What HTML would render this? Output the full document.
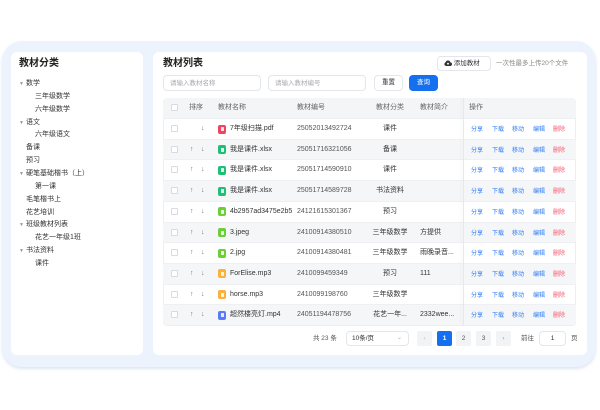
<!DOCTYPE html>
<html><head><meta charset="utf-8">
<style>
*{margin:0;padding:0;box-sizing:border-box}
body{width:600px;height:410px;background:#fff;font-family:"Liberation Sans","Noto Sans CJK SC",sans-serif;color:#333;position:relative;overflow:hidden}
.abs{position:absolute}
.outer{left:2px;top:41px;width:594px;height:326px;background:#edf3fd;border-radius:20px;box-shadow:0 2px 3px #dfe6f2}
.card{background:#fff;border-radius:6px}
.t{position:absolute;font-size:7px;color:#333;white-space:nowrap;line-height:10px}
.tri{position:absolute;font-size:5px;color:#999}
.h{font-weight:bold;font-size:10px;color:#222}
.inp{position:absolute;height:16px;border:1px solid #e3e6ea;border-radius:4px;font-size:6.5px;color:#aaa;padding:3px 6px;line-height:9px}
.row{position:absolute;left:163px;width:413px;height:20.7px;border-top:1px solid #eef0f3}
.row.o{background:#f5f6f8}
.cb{position:absolute;left:8px;top:6px;width:7px;height:7px;border:1px solid #d8dce2;border-radius:1px;background:#fff}
.ic{position:absolute;left:55px;top:5.5px;width:8px;height:9px;border-radius:2px}
.ic::after{content:"";position:absolute;left:2.5px;top:2.5px;width:3px;height:4px;background:rgba(255,255,255,.85);border-radius:.5px}
.op{position:absolute;top:7px;font-size:6px;color:#2f7cf6;line-height:8px}
.del{color:#f5566c}
.up{left:27px;top:5px;color:#777}.dn{left:38px;top:5px;color:#777}
.nm{left:67px;top:5px;width:62px;overflow:hidden}
.no{left:134px;top:5px;color:#555}
.ca{left:227px;top:5px;transform:translateX(-50%)}
.in{left:257px;top:5px}
.o1{left:308px}.o2{left:329px}.o3{left:349px}.o4{left:370px}.o5{left:390px}
.pg{position:absolute;top:331px;height:15px;width:15px;background:#f2f3f5;border-radius:2px;font-size:6.5px;color:#555;text-align:center;line-height:15px}
</style></head><body>
<div class="abs outer"></div>
<div class="abs card" style="left:11px;top:52px;width:132px;height:303px"></div>
<div class="abs card" style="left:153px;top:52px;width:434px;height:303px"></div>

<div class="t h" style="left:19px;top:59px">教材分类</div>
<div class="tri" style="left:19px;top:81px">▼</div><div class="t" style="left:26px;top:79px">数学</div>
<div class="t" style="left:35px;top:92px">三年级数学</div>
<div class="t" style="left:35px;top:105px">六年级数学</div>
<div class="tri" style="left:19px;top:120px">▼</div><div class="t" style="left:26px;top:118px">语文</div>
<div class="t" style="left:35px;top:130px">六年级语文</div>
<div class="t" style="left:26px;top:143px">备课</div>
<div class="t" style="left:26px;top:156px">预习</div>
<div class="tri" style="left:19px;top:171px">▼</div><div class="t" style="left:26px;top:169px">硬笔基础楷书（上）</div>
<div class="t" style="left:35px;top:182px">第一课</div>
<div class="t" style="left:26px;top:195px">毛笔楷书上</div>
<div class="t" style="left:26px;top:208px">花艺培训</div>
<div class="tri" style="left:19px;top:222px">▼</div><div class="t" style="left:26px;top:220px">班级教材列表</div>
<div class="t" style="left:35px;top:233px">花艺一年级1班</div>
<div class="tri" style="left:19px;top:248px">▼</div><div class="t" style="left:26px;top:246px">书法资料</div>
<div class="t" style="left:35px;top:259px">课件</div>

<div class="t h" style="left:163px;top:59px">教材列表</div>
<div class="abs" style="left:437px;top:56px;width:54px;height:15px;border:1px solid #e3e6ea;border-radius:4px;font-size:6.5px;line-height:13px;padding-left:6px">
<svg width="8" height="6" viewBox="0 0 8 6" style="vertical-align:-0.5px"><path d="M2 6 A2 2 0 0 1 1.6 2.2 A2.5 2.5 0 0 1 6.4 2.4 A1.8 1.8 0 0 1 6 6Z" fill="#333"/><path d="M4 5V3M3 4l1-1 1 1" stroke="#fff" stroke-width=".7" fill="none"/></svg> 添加教材</div>
<div class="t" style="left:496px;top:59px;font-size:6.5px;color:#888">一次性最多上传20个文件</div>

<div class="inp" style="left:163px;top:75px;width:98px">请输入教材名称</div>
<div class="inp" style="left:268px;top:75px;width:98px">请输入教材编号</div>
<div class="abs" style="left:374px;top:75px;width:29px;height:16px;border:1px solid #e3e6ea;border-radius:4px;font-size:6.5px;text-align:center;line-height:14px">重置</div>
<div class="abs" style="left:409px;top:75px;width:29px;height:16px;background:#1570ef;border-radius:4px;font-size:6.5px;text-align:center;line-height:16px;color:#fff">查询</div>

<div class="abs" style="left:163px;top:98px;width:413px;height:228px;border:1px solid #eceef2;border-radius:4px;background:#fff"></div>
<div class="row" style="top:98px;height:20px;background:#f4f5f7;border-radius:4px 4px 0 0;border-top:none">
<div class="cb"></div>
<div class="t" style="left:26px;top:5px;color:#666">排序</div>
<div class="t" style="left:55px;top:5px;color:#666">教材名称</div>
<div class="t" style="left:134px;top:5px;color:#666">教材编号</div>
<div class="t" style="left:213px;top:5px;color:#666">教材分类</div>
<div class="t" style="left:257px;top:5px;color:#666">教材简介</div>
<div class="t" style="left:306px;top:5px;color:#666">操作</div>
</div>

<div class="row" style="top:118px"><div class="cb"></div><div class="t dn">↓</div><div class="ic" style="background:#f0435c"></div><div class="t nm">7年级扫描.pdf</div><div class="t no">25052013492724</div><div class="t ca">课件</div><div class="t in"></div><div class="op o1">分享</div><div class="op o2">下载</div><div class="op o3">移动</div><div class="op o4">编辑</div><div class="op o5 del">删除</div></div>
<div class="row o" style="top:138.7px"><div class="cb"></div><div class="t up">↑</div><div class="t dn">↓</div><div class="ic" style="background:#1fbf76"></div><div class="t nm">我是课件.xlsx</div><div class="t no">25051716321056</div><div class="t ca">备课</div><div class="op o1">分享</div><div class="op o2">下载</div><div class="op o3">移动</div><div class="op o4">编辑</div><div class="op o5 del">删除</div></div>
<div class="row" style="top:159.4px"><div class="cb"></div><div class="t up">↑</div><div class="t dn">↓</div><div class="ic" style="background:#1fbf76"></div><div class="t nm">我是课件.xlsx</div><div class="t no">25051714590910</div><div class="t ca">课件</div><div class="op o1">分享</div><div class="op o2">下载</div><div class="op o3">移动</div><div class="op o4">编辑</div><div class="op o5 del">删除</div></div>
<div class="row o" style="top:180.1px"><div class="cb"></div><div class="t up">↑</div><div class="t dn">↓</div><div class="ic" style="background:#1fbf76"></div><div class="t nm">我是课件.xlsx</div><div class="t no">25051714589728</div><div class="t ca">书法资料</div><div class="op o1">分享</div><div class="op o2">下载</div><div class="op o3">移动</div><div class="op o4">编辑</div><div class="op o5 del">删除</div></div>
<div class="row" style="top:200.8px"><div class="cb"></div><div class="t up">↑</div><div class="t dn">↓</div><div class="ic" style="background:#6ccf3a"></div><div class="t nm">4b2957ad3475e2b5</div><div class="t no">24121615301367</div><div class="t ca">预习</div><div class="op o1">分享</div><div class="op o2">下载</div><div class="op o3">移动</div><div class="op o4">编辑</div><div class="op o5 del">删除</div></div>
<div class="row o" style="top:221.5px"><div class="cb"></div><div class="t up">↑</div><div class="t dn">↓</div><div class="ic" style="background:#6ccf3a"></div><div class="t nm">3.jpeg</div><div class="t no">24100914380510</div><div class="t ca">三年级数学</div><div class="t in">方提供</div><div class="op o1">分享</div><div class="op o2">下载</div><div class="op o3">移动</div><div class="op o4">编辑</div><div class="op o5 del">删除</div></div>
<div class="row" style="top:242.2px"><div class="cb"></div><div class="t up">↑</div><div class="t dn">↓</div><div class="ic" style="background:#6ccf3a"></div><div class="t nm">2.jpg</div><div class="t no">24100914380481</div><div class="t ca">三年级数学</div><div class="t in">雨晚录音...</div><div class="op o1">分享</div><div class="op o2">下载</div><div class="op o3">移动</div><div class="op o4">编辑</div><div class="op o5 del">删除</div></div>
<div class="row o" style="top:262.9px"><div class="cb"></div><div class="t up">↑</div><div class="t dn">↓</div><div class="ic" style="background:#fbb13c"></div><div class="t nm">ForElise.mp3</div><div class="t no">2410099459349</div><div class="t ca">预习</div><div class="t in">111</div><div class="op o1">分享</div><div class="op o2">下载</div><div class="op o3">移动</div><div class="op o4">编辑</div><div class="op o5 del">删除</div></div>
<div class="row" style="top:283.6px"><div class="cb"></div><div class="t up">↑</div><div class="t dn">↓</div><div class="ic" style="background:#fbb13c"></div><div class="t nm">horse.mp3</div><div class="t no">2410099198760</div><div class="t ca">三年级数学</div><div class="op o1">分享</div><div class="op o2">下载</div><div class="op o3">移动</div><div class="op o4">编辑</div><div class="op o5 del">删除</div></div>
<div class="row o" style="top:304.3px"><div class="cb"></div><div class="t up">↑</div><div class="t dn">↓</div><div class="ic" style="background:#5b7cf7"></div><div class="t nm">超然楼亮灯.mp4</div><div class="t no">24051194478756</div><div class="t ca">花艺一年...</div><div class="t in">2332wee...</div><div class="op o1">分享</div><div class="op o2">下载</div><div class="op o3">移动</div><div class="op o4">编辑</div><div class="op o5 del">删除</div></div>

<div class="abs" style="left:463px;top:98px;width:1px;height:227px;background:#e6e8ec;box-shadow:-2px 0 3px rgba(0,0,0,.06)"></div>

<div class="t" style="left:313px;top:334px;font-size:6.5px;color:#555">共 23 条</div>
<div class="abs" style="left:346px;top:331px;width:63px;height:15px;border:1px solid #e3e6ea;border-radius:4px;font-size:6.5px;line-height:13px;padding-left:5px">10条/页<span style="position:absolute;right:6px;color:#aaa;font-size:6px">⌄</span></div>
<div class="pg" style="left:417px;color:#bbb">‹</div>
<div class="pg" style="left:437px;background:#1570ef;color:#fff;font-weight:bold">1</div>
<div class="pg" style="left:456px">2</div>
<div class="pg" style="left:476px">3</div>
<div class="pg" style="left:496px;color:#999">›</div>
<div class="t" style="left:521px;top:334px;font-size:6.5px;color:#555">前往</div>
<div class="abs" style="left:539px;top:331px;width:27px;height:15px;border:1px solid #e3e6ea;border-radius:4px;font-size:6.5px;text-align:center;line-height:13px">1</div>
<div class="t" style="left:571px;top:334px;font-size:6.5px;color:#555">页</div>
</body></html>
